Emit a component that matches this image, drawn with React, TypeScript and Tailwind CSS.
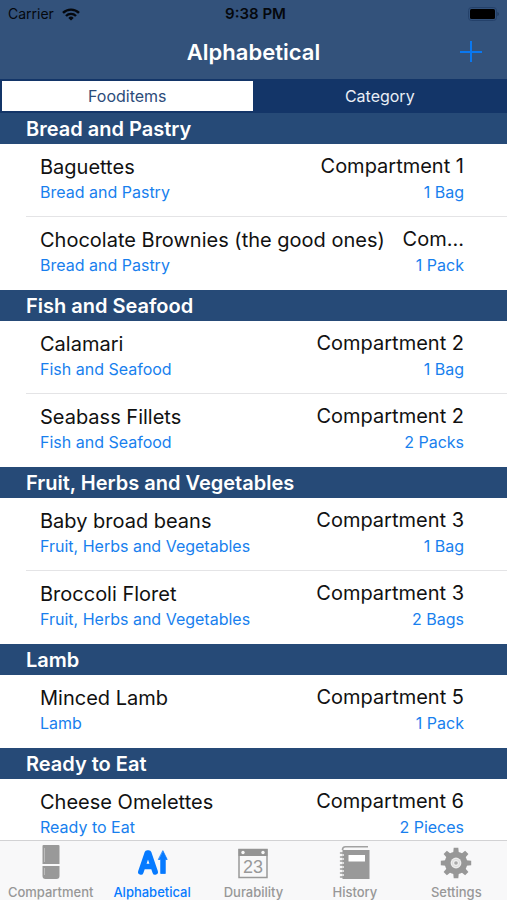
import React, { useState } from "react";

type Item = { name: string; place: string; amount: string };
type Group = { title: string; items: Item[] };

const groups: Group[] = [
  {
    title: "Bread and Pastry",
    items: [
      { name: "Baguettes", place: "Compartment 1", amount: "1 Bag" },
      { name: "Chocolate Brownies (the good ones)", place: "Com...", amount: "1 Pack" },
    ],
  },
  {
    title: "Fish and Seafood",
    items: [
      { name: "Calamari", place: "Compartment 2", amount: "1 Bag" },
      { name: "Seabass Fillets", place: "Compartment 2", amount: "2 Packs" },
    ],
  },
  {
    title: "Fruit, Herbs and Vegetables",
    items: [
      { name: "Baby broad beans", place: "Compartment 3", amount: "1 Bag" },
      { name: "Broccoli Floret", place: "Compartment 3", amount: "2 Bags" },
    ],
  },
  { title: "Lamb", items: [{ name: "Minced Lamb", place: "Compartment 5", amount: "1 Pack" }] },
  { title: "Ready to Eat", items: [{ name: "Cheese Omelettes", place: "Compartment 6", amount: "2 Pieces" }] },
];

function WifiIcon() {
  return (
    <svg width="18" height="13" viewBox="0 0 18 13" fill="none" stroke="#05080d" strokeWidth="2.4" aria-hidden="true">
      <path d="M1 4.900a11.300 11.300 0 0 1 16 0" />
      <path d="M4 8a7 7 0 0 1 10 0" />
      <path d="M9 12.600 6.300 9.900a3.800 3.800 0 0 1 5.400 0z" fill="#05080d" stroke="none" />
    </svg>
  );
}

function BatteryIcon() {
  return (
    <svg width="32" height="14" viewBox="0 0 32 14" aria-hidden="true">
      <rect x="1.500" y="0.500" width="28" height="13" rx="3" fill="none" stroke="#24416a" />
      <rect x="3" y="2" width="25" height="10" rx="1.500" fill="#000" />
      <path d="M30.500 5c1.600.600 1.600 3.400 0 4z" fill="#1d3556" />
    </svg>
  );
}

function FridgeIcon() {
  return (
    <svg width="36" height="36" viewBox="0 0 36 36" fill="#999" aria-hidden="true">
      <path d="M9.500 2a1 1 0 0 1 1-1h15a1 1 0 0 1 1 1v18h-17z" />
      <path d="M9.500 22h17v10a3 3 0 0 1-3 3h-11a3 3 0 0 1-3-3z" />
      <path d="M11.500 4v14M11.500 24v7" stroke="#bcbcbc" strokeWidth="1" />
    </svg>
  );
}

function AlphabeticalIcon() {
  return (
    <svg width="36" height="36" viewBox="0 0 36 36" fill="none" stroke="#067aff" strokeLinecap="round" strokeLinejoin="round" aria-hidden="true">
      <path d="M6.800 28 13.300 9h1.400L21.200 28M9.500 22.500h9" strokeWidth="5.500" />
      <path d="M29 7 33.200 15.500h-1.900V29.500h-4.600V15.500H24.700z" fill="#067aff" strokeWidth="0.800" />
    </svg>
  );
}

function CalendarIcon() {
  return (
    <svg width="36" height="36" viewBox="0 0 36 36" fill="none" aria-hidden="true">
      <path d="M4 5.500h28V33.500H4z" stroke="#999" strokeWidth="1.500" />
      <path d="M3.500 5h29v7h-29z" fill="#949494" />
      <circle cx="8" cy="8.500" r="1.700" fill="#f8f8f8" />
      <circle cx="28" cy="8.500" r="1.700" fill="#f8f8f8" />
      <text x="18" y="29" textAnchor="middle" fill="#999" fontSize="18" fontFamily="Liberation Sans, sans-serif">23</text>
    </svg>
  );
}

function BookIcon() {
  return (
    <svg width="36" height="36" viewBox="0 0 36 36" fill="none" aria-hidden="true">
      <path d="M31 2.800H8.500C6 2.800 5.500 4 5.500 6" stroke="#a2a2a2" strokeWidth="1.600" />
      <path d="M5.500 6h27v29h-27z" fill="#999" />
      <path d="M11.500 11h16.500v6.500H11.500z" fill="#fff" />
      <path d="M5.500 11h1.500M5.500 15h1.500M5.500 19h1.500M5.500 23h1.500M5.500 27h1.500M5.500 31h1.500" stroke="#f4f4f4" strokeWidth="1.600" />
      <path d="M3.500 9h4M3.500 13h4M3.500 17h4M3.500 21h4M3.500 25h4M3.500 29h4M3.500 33h4" stroke="#999" strokeWidth="1.500" strokeLinecap="round" />
    </svg>
  );
}

function GearIcon() {
  const angles = [0, 45, 90, 135, 180, 225, 270, 315];
  return (
    <svg width="36" height="36" viewBox="0 0 36 36" fill="#979797" aria-hidden="true">
      <circle cx="18" cy="19" r="11.300" />
      {angles.map((a) => (
        <path key={a} d="M15.200 9 15.700 3.800h4.600l.5 5.200z" transform={`rotate(${a} 18 19)`} />
      ))}
      <circle cx="18" cy="19" r="5.400" fill="#ededed" />
      <circle cx="18" cy="19" r="3.700" fill="none" stroke="#dcdcdc" strokeWidth="1" />
      <circle cx="18" cy="19" r="1.800" fill="#a8a8a8" />
    </svg>
  );
}

const tabs = [
  { label: "Compartment", Icon: FridgeIcon },
  { label: "Alphabetical", Icon: AlphabeticalIcon },
  { label: "Durability", Icon: CalendarIcon },
  { label: "History", Icon: BookIcon },
  { label: "Settings", Icon: GearIcon },
];

function Row({ item, category, last }: { item: Item; category: string; last: boolean }) {
  return (
    <li className="h-[73px] pl-[26px]">
      <div className={`flex h-full gap-4 border-b pr-[43px] pl-[14px] pt-2 ${last ? "border-transparent" : "border-[#e4e4e6]"}`}>
        <div className="shrink-0">
          <p className="text-xl leading-[30px] text-[#111]">{item.name}</p>
          <p className="text-base leading-5 text-[#187fee]">{category}</p>
        </div>
        <div className="min-w-0 flex-1 text-right">
          <p className="truncate text-xl leading-[28px] text-[#111]">{item.place}</p>
          <p className="pt-[2px] text-base leading-5 text-[#187fee]">{item.amount}</p>
        </div>
      </div>
    </li>
  );
}

export default function App() {
  const [segment, setSegment] = useState("Fooditems");
  const [tab, setTab] = useState("Alphabetical");
  return (
    <div className="flex h-dvh flex-col bg-white font-['Inter','Liberation_Sans',sans-serif]">
      <header className="shrink-0 bg-[#33527b]">
        <div className="grid h-7 grid-cols-[1fr_auto_1fr] items-center pr-1 pl-2 text-sm text-[#05080d]">
          <div className="flex items-center gap-2">
            <span>Carrier</span>
            <WifiIcon />
          </div>
          <span className="text-center text-[15px] font-semibold">9:38 PM</span>
          <div className="flex justify-end pr-1">
            <BatteryIcon />
          </div>
        </div>
        <div className="grid h-[51px] grid-cols-[48px_1fr_48px] items-center px-3 pb-1">
          <h1 className="col-start-2 text-center text-[22px] leading-7 font-semibold text-white">Alphabetical</h1>
          <button type="button" aria-label="Add" className="flex justify-center">
            <svg width="24" height="24" viewBox="0 0 24 24" stroke="#0a78f0" strokeWidth="2" aria-hidden="true">
              <path d="M12 1v21M1 12h22" />
            </svg>
          </button>
        </div>
        <div className="grid h-[34px] grid-cols-2 gap-[2px] bg-[#133568] p-[2px]">
          {["Fooditems", "Category"].map((s) => (
            <button
              key={s}
              type="button"
              aria-pressed={segment === s}
              onClick={() => setSegment(s)}
              className={`text-base leading-5 ${segment === s ? "bg-white text-[#2c4c7a]" : "text-[#e9eef6]"}`}
            >
              {s}
            </button>
          ))}
        </div>
      </header>

      <main className="min-h-0 flex-1 overflow-y-auto [scrollbar-width:none]">
        {groups.map((g) => (
          <section key={g.title}>
            <h2 className="h-[31px] bg-[#264a77] pl-[26px] text-xl leading-[32px] font-semibold text-white">{g.title}</h2>
            <ul>
              {g.items.map((item, i) => (
                <Row key={item.name} item={item} category={g.title} last={i === g.items.length - 1} />
              ))}
            </ul>
          </section>
        ))}
      </main>

      <nav className="grid h-[60px] shrink-0 grid-cols-5 border-t border-[#d2d2d4] bg-[#f8f8f9]">
        {tabs.map(({ label, Icon }) => (
          <button
            key={label}
            type="button"
            aria-current={tab === label ? "page" : undefined}
            onClick={() => setTab(label)}
            className={`flex flex-col items-center gap-1 pt-[3px] text-[13px] leading-4 font-medium ${tab === label ? "text-[#067aff]" : "text-[#979797]"}`}
          >
            <Icon />
            {label}
          </button>
        ))}
      </nav>
    </div>
  );
}
